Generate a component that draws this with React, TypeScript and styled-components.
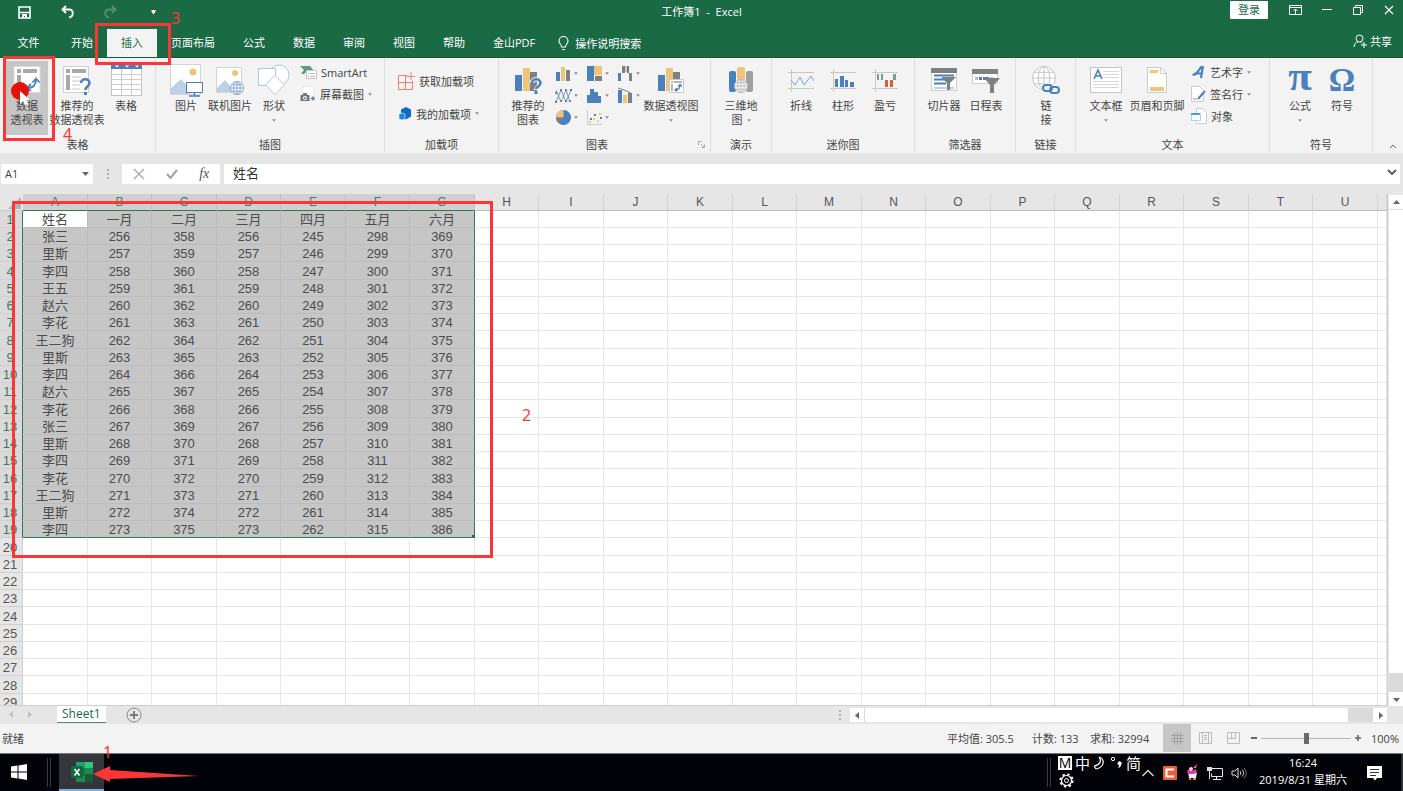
import React from "react";
import styled, { createGlobalStyle, css } from "styled-components";

const GREEN = "#1b6a46";
const BLUE = "#4a80bd";
const SAND = "#efc57c";
const GREY = "#808080";
const RED = "#fb3636";

const Global = createGlobalStyle`
  * { box-sizing: border-box; }
  body {
    margin: 0;
    font-family: "Open Sans", "Noto Sans CJK SC", sans-serif;
    font-size: 11px;
    color: #444;
    overflow: hidden;
  }
  button, input { font: inherit; color: inherit; }
  button { background: none; border: 0; padding: 0; margin: 0; }
  svg { display: block; flex: none; }
`;

const Screen = styled.div`
  position: relative;
  display: flex;
  flex-direction: column;
  height: 100vh;
  background: #e6e6e6;
`;

/* ---------- title bar and tabs ---------- */

const Header = styled.header`
  flex: none;
  background: ${GREEN};
  color: #fff;
  border-bottom: 1px solid #0f5c39;
`;

const TitleBar = styled.div`
  display: grid;
  grid-template-columns: 1fr auto 1fr;
  height: 28px;
`;

const QuickAccess = styled.div`
  display: flex;
  align-items: center;
  padding: 0 0 4px 16px;
  gap: 26px;
`;

const IconButton = styled.button<{ $dim?: boolean }>`
  display: flex;
  align-items: center;
  justify-content: center;
  width: 17px;
  height: 16px;
  opacity: ${(p) => (p.$dim ? 0.25 : 1)};
`;

const Title = styled.div`
  line-height: 24px;
  white-space: pre;
`;

const WindowControls = styled.div`
  display: flex;
  justify-content: flex-end;
  align-items: center;
  padding: 0 6px 8px 0;
  gap: 14px;
`;

const LoginButton = styled.button`
  width: 38px;
  height: 18px;
  line-height: 18px;
  background: #fff;
  color: ${GREEN};
  border-radius: 1px;
  margin-right: 5px;
  align-self: flex-start;
  margin-top: 1px;
`;

const TabRow = styled.nav`
  display: flex;
  height: 28px;
  margin-top: 1px;
`;

const Tab = styled.button<{ $active?: boolean; $wide?: boolean }>`
  padding: 0 14px;
  min-width: ${(p) => (p.$wide ? 57 : 50)}px;
  line-height: 28px;
  white-space: nowrap;
  ${(p) => p.$active && css`background: #f3f3f3; color: ${GREEN};`}
`;

const TellMe = styled.button`
  display: flex;
  align-items: center;
  gap: 6px;
  padding-left: 9px;
`;

const Share = styled.button`
  display: flex;
  align-items: center;
  gap: 3px;
  margin-left: auto;
  padding: 0 11px 4px 0;
`;

/* ---------- ribbon ---------- */

const Ribbon = styled.section`
  display: flex;
  flex: none;
  height: 96px;
  background: #f3f3f3;
  border-bottom: 1px solid #ececec;
`;

const Group = styled.div<{ $w: number; $pad: number }>`
  position: relative;
  display: flex;
  flex-direction: column;
  flex: none;
  width: ${(p) => p.$w}px;
  border-right: 1px solid #dcdcdc;
  margin: 1px 0;
  > div { padding-left: ${(p) => p.$pad}px; }
`;

const GroupBody = styled.div`
  display: flex;
  flex: 1;
  padding-top: 2px;
`;

const GroupLabel = styled.span<{ $launcher?: boolean }>`
  height: 16px;
  line-height: 17px;
  text-align: center;
  padding-right: ${(p) => (p.$launcher ? 15 : 0)}px;
`;

const BigButton = styled.button<{ $w: number; $on?: boolean }>`
  display: flex;
  flex-direction: column;
  align-items: center;
  flex: none;
  width: ${(p) => p.$w}px;
  height: 74px;
  line-height: 14px;
  white-space: nowrap;
  background: ${(p) => (p.$on ? "#c6c6c6" : "none")};
`;

const IconBox = styled.span`
  display: flex;
  align-items: center;
  justify-content: center;
  height: 38px;
`;

const LabelLine = styled.span`
  display: flex;
  align-items: center;
  justify-content: center;
  gap: 4px;
  height: 14px;
`;

const SmallColumn = styled.div<{ $row: number; $top?: number }>`
  display: flex;
  flex-direction: column;
  margin-left: 6px;
  padding-top: ${(p) => p.$top ?? 0}px;
  button { height: ${(p) => p.$row}px; }
`;

const SmallButton = styled.button`
  display: flex;
  align-items: center;
  gap: 4px;
  white-space: nowrap;
`;

const ChartGrid = styled.div`
  display: grid;
  grid-template-columns: 31px 31px 26px;
  grid-auto-rows: 22px;
  margin-left: 7px;
  padding-top: 1px;
  height: 67px;
  button { display: flex; align-items: center; gap: 2px; }
`;

const Glyph = styled.span<{ $size: number; $lift: number }>`
  font: bold ${(p) => p.$size}px/28px "Liberation Serif", serif;
  padding-bottom: ${(p) => p.$lift}px;
  color: ${BLUE};
`;

const Launcher = styled.button`
  position: absolute;
  right: 5px;
  bottom: 4px;
`;

const RibbonEnd = styled.div`
  display: flex;
  flex: 1;
  align-items: flex-end;
  justify-content: flex-end;
  padding: 0 6px 4px 0;
`;

/* ---------- formula bar ---------- */

const FormulaRow = styled.div`
  display: flex;
  flex: none;
  height: 40px;
  padding: 10px 3px 10px 1px;
`;

const NameBox = styled.label`
  display: flex;
  align-items: center;
  width: 92px;
  padding: 0 4px 2px;
  background: #fff;
  input { flex: 1; min-width: 0; border: 0; padding: 0; outline: 0; background: none; }
`;

const Dots = styled.span`
  display: flex;
  align-items: center;
  justify-content: center;
  width: 29px;
`;

const FormulaButtons = styled.div`
  display: flex;
  align-items: center;
  justify-content: space-around;
  width: 98px;
  background: #fff;
  margin-right: 4px;
`;

const FxLabel = styled.button`
  font: italic 14px/16px "Liberation Serif", serif;
  color: #555;
`;

const FormulaInput = styled.label`
  display: flex;
  align-items: center;
  flex: 1;
  background: #fff;
  padding: 0 3px 4px 9px;
  input {
    flex: 1;
    border: 0;
    padding: 0;
    outline: 0;
    background: none;
    height: 16px;
    font-size: 13px;
    color: #333;
  }
`;

/* ---------- sheet ---------- */

const SheetArea = styled.main`
  display: flex;
  flex: 1;
  min-height: 0;
`;

const GridView = styled.div`
  flex: 1;
  min-width: 0;
  overflow: hidden;
  background: #fff;
  border-right: 1px solid #cfcfcf;
  border-bottom: 1px solid #cfcfcf;
`;

const Table = styled.table`
  table-layout: fixed;
  width: 100%;
  border-collapse: separate;
  border-spacing: 0;
  font-family: "Liberation Sans", "Noto Sans CJK SC", sans-serif;
  font-size: 13px;
  th, td { padding: 0; overflow: hidden; white-space: nowrap; text-align: center; }
`;

const ColHead = styled.th<{ $on?: boolean }>`
  height: 17px;
  line-height: 16px;
  font-size: 12px;
  font-weight: 400;
  background: ${(p) => (p.$on ? "#d0d0d0" : "#e6e6e6")};
  color: ${(p) => (p.$on ? "#3f7a5f" : "#555")};
  border-right: 1px solid ${(p) => (p.$on ? "#c2c2c2" : "#d4d4d4")};
  border-bottom: 1px solid ${(p) => (p.$on ? "#2f7a56" : "#bdbdbd")};
`;

const Corner = styled.th`
  background: #e6e6e6;
  border-bottom: 1px solid #c8c8c8;
  svg { margin: 2px 0 0 8px; }
`;

const Row = styled.tr<{ $tall: boolean }>`
  height: ${(p) => (p.$tall ? 18 : 17)}px;
  line-height: 14px;
  && > * { padding-top: 2px; }
`;

const RowHead = styled.th<{ $on: boolean }>`
  font-weight: 400;
  background: ${(p) => (p.$on ? "#dadada" : "#e6e6e6")};
  color: ${(p) => (p.$on ? "#3f7a5f" : "#555")};
  border-right: 1px solid ${(p) => (p.$on ? "#2f7a56" : "#cfcfcf")};
  border-bottom: 1px solid #d0d0d0;
  && { padding-right: 2px; }
`;

const Cell = styled.td<{ $on?: boolean; $active?: boolean; $right?: boolean; $bottom?: boolean }>`
  color: #4c4c4c;
  background: ${(p) => (p.$active ? "#fff" : p.$on ? "#c6c6c6" : "#fff")};
  border-right: 1px solid ${(p) => (p.$right ? "#2f7a56" : p.$on ? "#bcbcbc" : "#e6e6e6")};
  border-bottom: 1px solid ${(p) => (p.$bottom ? "#2f7a56" : p.$on ? "#bcbcbc" : "#e6e6e6")};
  ${(p) => p.$right && p.$bottom && css`
    background: linear-gradient(${GREEN}, ${GREEN}) right bottom / 2px 2px no-repeat #c6c6c6;
  `}
`;

const VScroll = styled.div`
  display: flex;
  flex-direction: column;
  width: 14px;
  margin: 1px 0 0 1px;
  background: #dadada;
`;

const ScrollButton = styled.button`
  display: flex;
  align-items: center;
  justify-content: center;
  flex: none;
  width: 14px;
  height: 14px;
  background: #fff;
`;

const VThumb = styled.div`
  flex: 1;
  background: #fff;
  margin: 1px 0 19px;
`;

const SheetBar = styled.div`
  display: flex;
  align-items: flex-start;
  flex: none;
  height: 18px;
`;

const SheetNav = styled.div`
  display: flex;
  justify-content: center;
  gap: 11px;
  width: 57px;
  padding: 5px 17px 0 0;
`;

const SheetTab = styled.button`
  height: 17px;
  padding: 0 5px;
  line-height: 16px;
  font-size: 12px;
  color: ${GREEN};
  background: #fff;
  border-bottom: 1px solid #4f8d70;
`;

const AddSheet = styled.button`
  margin: 1px 0 0 20px;
`;

const HScroll = styled.div`
  display: flex;
  width: 537px;
  height: 14px;
  margin: 2px 16px 0 0;
  background: #dadada;
`;

const HThumb = styled.div`
  flex: 1;
  background: #fff;
  margin: 0 25px 0 1px;
`;

const BarDots = styled.span`
  margin: 4px 9px 0 auto;
`;

/* ---------- status bar ---------- */

const StatusBar = styled.footer`
  display: flex;
  align-items: center;
  flex: none;
  height: 30px;
  padding: 0 4px 1px 2px;
  background: #f3f3f3;
  border-bottom: 1px solid #777;
`;

const Spacer = styled.span`
  flex: 1;
`;

const Stat = styled.span<{ $w: number }>`
  width: ${(p) => p.$w}px;
  white-space: nowrap;
`;

const ViewButton = styled.button<{ $on?: boolean }>`
  display: flex;
  align-items: center;
  justify-content: center;
  width: 28px;
  height: 28px;
  background: ${(p) => (p.$on ? "#c6c6c6" : "none")};
`;

const ZoomButton = styled.button`
  display: flex;
  justify-content: center;
  width: 14px;
`;

const ZoomRange = styled.input`
  appearance: none;
  width: 90px;
  height: 12px;
  margin: 0;
  background: linear-gradient(#b5b5b5, #b5b5b5) center / 100% 1px no-repeat;
  &::-webkit-slider-thumb {
    appearance: none;
    width: 5px;
    height: 11px;
    background: #6a6a6a;
  }
`;

const ZoomValue = styled.span`
  width: 34px;
  text-align: right;
`;

/* ---------- task bar ---------- */

const TaskBar = styled.div`
  display: flex;
  flex: none;
  height: 37px;
  background: #020308;
  color: #fff;
  border-right: 2px solid #2c2d31;
`;

const StartButton = styled.button`
  width: 47px;
  padding: 0 0 1px 11px;
`;

const Grip = styled.span`
  width: 4px;
  margin: 4px 0;
  border: solid #3a3b3f;
  border-width: 0 1px;
`;

const TaskApp = styled.button`
  display: flex;
  align-items: center;
  justify-content: center;
  width: 45px;
  margin-left: 8px;
  background: #34363b;
  border-bottom: 2px solid #7fb0dc;
`;

const Ime = styled.div`
  display: grid;
  grid-template-rows: 18px 16px;
  align-items: center;
  width: 89px;
  padding-left: 7px;
  div { display: flex; align-items: center; gap: 3px; font-size: 15px; line-height: 18px; }
`;

const ImeMode = styled.b`
  width: 14px;
  height: 14px;
  line-height: 14px;
  text-align: center;
  font-weight: 400;
  font-size: 14px;
  background: #fff;
  color: #000;
`;

const Tray = styled.div`
  display: flex;
  align-items: center;
  gap: 8px;
  padding-left: 1px;
`;

const Clock = styled.div`
  width: 112px;
  text-align: center;
  line-height: 17px;
`;

const Notice = styled.button`
  width: 34px;
  padding-left: 8px;
  margin-right: 8px;
`;

/* ---------- tutorial marks laid over the window ---------- */

const MarkBox = styled.div<{ $x: number; $y: number; $w: number; $h: number }>`
  position: absolute;
  left: ${(p) => p.$x}px;
  top: ${(p) => p.$y}px;
  width: ${(p) => p.$w}px;
  height: ${(p) => p.$h}px;
  border: 3px solid ${RED};
  pointer-events: none;
`;

const MarkNumber = styled.span<{ $x: number; $y: number }>`
  position: absolute;
  left: ${(p) => p.$x}px;
  top: ${(p) => p.$y}px;
  font: 16px/18px "Noto Sans", sans-serif;
  color: ${RED};
`;

const MarkSvg = styled.svg<{ $x: number; $y: number }>`
  position: absolute;
  left: ${(p) => p.$x}px;
  top: ${(p) => p.$y}px;
  pointer-events: none;
`;

/* ---------- icons ---------- */

type SvgProps = { w: number; h: number; children: React.ReactNode };
const Svg = ({ w, h, children }: SvgProps) => (
  <svg width={w} height={h} viewBox={`0 0 ${w} ${h}`} fill="none" aria-hidden="true">
    {children}
  </svg>
);

const Caret = () => (
  <Svg w={4} h={3}><path d="M0.500 0.500h3L2 2.500z" fill="#777" stroke="#999" strokeWidth="0.400" /></Svg>
);

const PivotIcon = () => (
  <Svg w={28} h={30}>
    <rect x="1" y="1.500" width="26" height="26" fill="#fff" stroke="#dadada" />
    <path d="M4 4h4v4H4zM10 4h14v4H10zM4 10h4v15H4z" fill="#a8a8a8" />
    <path d="M14 23c7 0 9-3 9-9" stroke={BLUE} strokeWidth="2" />
    <path d="M18 19l-4 4 4 3M19.500 17.500l3.500-4 3.500 4" stroke={BLUE} strokeWidth="1.800" />
  </Svg>
);

const RecommendedPivotIcon = () => (
  <Svg w={30} h={30}>
    <rect x="1.500" y="1.500" width="25" height="26" fill="#fff" stroke="#cfcfcf" />
    <path d="M4 4h4v4H4zM10 4h14v4H10zM4 10h4v15H4z" fill="#a8a8a8" />
    <path d="M10 12h9M10 16h8M10 20h8M10 24h8" stroke="#c9c9c9" />
    <path d="M19 18c0-5 8.500-5 8.500 0 0 3.500-4 3.500-4 7" stroke={BLUE} strokeWidth="2.600" />
    <rect x="22" y="27" width="3" height="3" fill={BLUE} />
  </Svg>
);

const TableIcon = () => (
  <Svg w={31} h={32}>
    <rect x="0.500" y="0.500" width="30" height="31" fill="#fff" stroke="#c4c4c4" />
    <rect width="31" height="5" fill={BLUE} />
    <path d="M4 1.500h4l-2 2zM14 1.500h4l-2 2zM24 1.500h4l-2 2z" fill="#fff" />
    <path d="M10.500 5v26M20.500 5v26M0 10.500h31M0 15.500h31M0 20.500h31M0 25.500h31" stroke="#cccccc" />
  </Svg>
);

const PictureIcon = () => (
  <Svg w={34} h={34}>
    <rect x="1.500" y="1.500" width="30" height="30" fill="#fff" stroke="#d4d4d4" />
    <circle cx="24" cy="9" r="3.500" fill={SAND} />
    <path d="M1 31V26L12 16l9 10v5z" fill="#bcd0e6" />
    <rect x="17.500" y="19.500" width="16" height="10" fill="#fff" stroke={BLUE} />
    <path d="M25.500 30v3M20 33h11" stroke={BLUE} strokeWidth="1.500" />
  </Svg>
);

const Globe = ({ x, y, r, color }: { x: number; y: number; r: number; color: string }) => (
  <g stroke={color} fill="none">
    <circle cx={x} cy={y} r={r} fill="#fff" />
    <ellipse cx={x} cy={y} rx={r / 2} ry={r} />
    <path d={`M${x - r} ${y}h${2 * r}M${x} ${y - r}v${2 * r}M${x - r * 0.85} ${y - r / 2}h${r * 1.7}M${x - r * 0.85} ${y + r / 2}h${r * 1.7}`} />
  </g>
);

const OnlinePictureIcon = () => (
  <Svg w={28} h={30}>
    <rect x="0.500" y="2.500" width="25" height="25" fill="#fff" stroke="#d4d4d4" />
    <circle cx="19" cy="8" r="3" fill={SAND} />
    <path d="M1 27V23l8-8 7 8v4z" fill="#bcd0e6" />
    <Globe x={21} y={23} r={6.5} color="#86a9d0" />
  </Svg>
);

const ShapesIcon = () => (
  <Svg w={32} h={32}>
    <g fill="#fff" stroke="#b0c7e0">
      <circle cx="21" cy="11" r="10" />
      <rect x="0.500" y="4.500" width="17" height="17" />
      <path d="M17 11.500l9.500 9.500-9.500 9.500L7.500 21z" />
    </g>
  </Svg>
);

const SmartArtIcon = () => (
  <Svg w={17} h={15}>
    <path d="M0 1h10l4 5H7L4 9H1l3-4z" fill="#5f9a84" />
    <rect x="6.500" y="5.500" width="10" height="8" fill="#fff" stroke="#c4c4c4" />
    <path d="M8 8.500h1M10 8.500h5M8 11.500h1M10 11.500h5" stroke="#bbb" />
  </Svg>
);

const ScreenshotIcon = () => (
  <Svg w={16} h={16}>
    <path d="M2.500 8V0.500h11V11" fill="#fff" stroke="#dcdcdc" strokeDasharray="1 1" />
    <path d="M0.500 9h2l1-2h3l1 2h2v6h-9z" fill="#777" />
    <circle cx="5" cy="12" r="2" fill="#fff" />
    <circle cx="5" cy="12" r="1" fill="#777" />
    <path d="M11 12.500h4M13 10.500v4" stroke={BLUE} strokeWidth="1.500" />
  </Svg>
);

const GetAddinIcon = () => (
  <Svg w={17} h={18}>
    <path d="M0.500 3.500h7v14h-7zM0.500 10.500h14v7h-14M7.500 3.500h2M14.500 10.500v-2M13 0v8M9 4.500h8" stroke="#ea8563" />
  </Svg>
);

const MyAddinIcon = () => (
  <Svg w={14} h={14}>
    <path d="M8 0l5 2.500v7L8 12.500 3 10V2.500z" fill="#0f6ac8" />
    <path d="M1 7l3-1 3 1v5l-3 1-3-1z" fill="#1c86e8" stroke="#f3f3f3" strokeWidth="0.600" />
  </Svg>
);

const BarsBase = () => (
  <>
    <rect y="8" width="7" height="16" fill={BLUE} />
    <rect x="8" y="1" width="7" height="23" fill={SAND} />
    <rect x="15" y="5" width="7" height="19" fill={GREY} />
  </>
);

const RecommendedChartIcon = () => (
  <Svg w={27} h={30}>
    <g transform="translate(0 2)"><BarsBase /></g>
    <path d="M17 18c0-5 8.500-5 8.500 0 0 3.500-4.500 3.500-4.500 7" stroke="#f3f3f3" strokeWidth="4.500" />
    <path d="M17 18c0-5 8.500-5 8.500 0 0 3.500-4.500 3.500-4.500 6" stroke={BLUE} strokeWidth="2.600" />
    <rect x="19.500" y="26" width="3" height="3" fill={BLUE} />
  </Svg>
);

const PivotChartIcon = () => (
  <Svg w={27} h={30}>
    <g transform="translate(0 2)"><BarsBase /></g>
    <rect x="11.500" y="14.500" width="14" height="13" fill="#fff" stroke="#ccc" />
    <path d="M13 16h2v2h-2zM16 16h8v2h-8zM13 19h2v7h-2z" fill="#b5b5b5" />
    <path d="M17 25c4 0 5-2 5-5M19 23l-2 2 2 1.500M20 21.500l2-2 2 2" stroke={BLUE} strokeWidth="1.300" />
  </Svg>
);

const chartIcons: Record<string, React.ReactNode> = {
  柱形图: (
    <><rect x="1" y="7" width="4" height="9" fill={BLUE} /><rect x="6" y="2" width="4" height="14" fill={SAND} /><rect x="11" y="5" width="4" height="11" fill={GREY} /></>
  ),
  树状图: (
    <><rect x="1" y="1" width="7" height="15" fill={BLUE} /><rect x="8" y="1" width="8" height="9" fill={SAND} /><rect x="9" y="11" width="7" height="5" fill={GREY} /></>
  ),
  瀑布图: (
    <><rect x="1" y="8" width="3" height="8" fill={BLUE} /><rect x="5" y="1" width="3" height="7" fill={GREY} /><rect x="8" y="1" width="3" height="6" fill={SAND} /><rect x="10" y="1" width="2" height="7" fill={BLUE} /><rect x="12" y="8" width="3" height="8" fill={GREY} /></>
  ),
  折线图: (
    <><path d="M1 3l5 12 5-12 4 12" stroke={GREY} strokeWidth="0.800" /><path d="M1 15L6 3l5 12 5-12" stroke={BLUE} strokeWidth="0.800" /><path d="M0 14h2v2H0zM5 2h2v2H5zM10 13h2v2h-2zM15 2h2v2h-2z" fill={BLUE} /><path d="M0 5h2v2H0zM5 13h2v2H5zM10 2h2v2h-2zM14 13h2v2h-2z" fill={GREY} /></>
  ),
  直方图: (
    <path d="M1 8h3v8H1zM4 2h4v14H4zM8 5h4v11H8zM12 9h3v7h-3z" fill={BLUE} />
  ),
  组合图: (
    <><rect x="1" y="3" width="4" height="13" fill={BLUE} /><rect x="6" y="8" width="4" height="8" fill={SAND} /><rect x="11" y="6" width="4" height="10" fill={GREY} /><path d="M1 1l6 2 7 3" stroke={GREY} /></>
  ),
  饼图: (
    <><circle cx="8.500" cy="8.500" r="7.500" fill={BLUE} /><path d="M8.500 8.500V1A7.500 7.500 0 0 0 1 8.500z" fill={SAND} /><path d="M8.500 8.500H1A7.500 7.500 0 0 0 4 14.500z" fill={GREY} /></>
  ),
  散点图: (
    <><path d="M1.500 1v14.500H16" stroke="#ccc" /><path d="M4 9h2v2H4zM8 5h2v2H8zM14 8h2v2h-2z" fill={BLUE} /><path d="M3 12h2v2H3zM7 9h2v2H7zM11 11h2v2h-2zM13 4h2v2h-2z" fill={SAND} /></>
  ),
};

const MapIcon = () => (
  <Svg w={26} h={28}>
    <rect x="1" y="5" width="7" height="21" rx="2" fill={BLUE} />
    <rect x="9" y="1" width="8" height="24" rx="2" fill={SAND} />
    <rect x="18" y="5" width="7" height="21" rx="2" fill="#a0a0a0" />
    <Globe x={13} y={20} r={6.5} color="#bbb" />
  </Svg>
);

const SparkFrame = ({ children }: { children: React.ReactNode }) => (
  <Svg w={26} h={24}>
    <path d="M0 4.500h26M0 20.500h26M3.500 1v23" stroke="#c8c8c8" />
    {children}
  </Svg>
);

const SparkLine = () => (
  <SparkFrame><path d="M3 12l4 5 5-8 4 8 7-9 3 5" stroke="#7ba0cf" /></SparkFrame>
);
const SparkColumn = () => (
  <SparkFrame><path d="M5 11h3v8H5zM10 8h4v11h-4zM15 12h3v7h-3zM20 14h4v5h-4z" fill={BLUE} /></SparkFrame>
);
const SparkWinLoss = () => (
  <SparkFrame>
    <path d="M5 6h2v6H5zM9 6h2v6H9zM21 6h3v6h-3z" fill="#6ea392" />
    <path d="M13 12h3v7h-3zM18 12h3v7h-3z" fill="#d8622f" />
  </SparkFrame>
);

const SlicerIcon = () => (
  <Svg w={26} h={26}>
    <rect x="0.500" y="1.500" width="25" height="22" fill="#fff" stroke="#cfcfcf" />
    <rect width="26" height="5" y="1" fill={GREY} />
    <path d="M3 8.500h20M3 12.500h14M3 16.500h12" stroke={BLUE} strokeWidth="2" />
    <path d="M3 21h20" stroke="#bcd0e6" strokeWidth="2" />
    <path d="M10 10h15l-6 6v7h-3v-7z" fill={GREY} />
  </Svg>
);

const TimelineIcon = () => (
  <Svg w={28} h={28}>
    <rect x="0.500" y="3.500" width="25" height="14" fill="#fff" stroke="#cfcfcf" />
    <rect y="3" width="26" height="5" fill={GREY} />
    <path d="M3 12.500h3M18 12.500h3" stroke="#bbb" strokeWidth="3" />
    <path d="M7 12.500h3M11 12.500h6" stroke={BLUE} strokeWidth="3" />
    <path d="M12 12h16l-6 7v8h-4v-8z" fill={GREY} />
  </Svg>
);

const LinkIcon = () => (
  <Svg w={30} h={32}>
    <Globe x={13} y={14} r={11.5} color="#c4c4c4" />
    <g stroke="#f3f3f3" strokeWidth="5">
      <rect x="13" y="21" width="9" height="6" rx="3" /><rect x="19" y="23" width="9" height="6" rx="3" />
    </g>
    <g stroke={BLUE} strokeWidth="2">
      <rect x="12" y="21" width="9" height="6" rx="3" /><rect x="19" y="23" width="9" height="6" rx="3" />
    </g>
  </Svg>
);

const TextBoxIcon = () => (
  <Svg w={32} h={28}>
    <rect x="0.500" y="1.500" width="31" height="25" fill="#fff" stroke="#c4c4c4" />
    <path d="M4 13l4-9 4 9M5.500 10h5" stroke={BLUE} strokeWidth="1.600" />
    <path d="M13 5.500h16M13 8.500h16M13 11.500h16M3 15.500h26M3 18.500h26M3 21.500h26" stroke="#d8d8d8" />
  </Svg>
);

const HeaderFooterIcon = () => (
  <Svg w={20} h={28}>
    <path d="M0.500 1.500h13l6 6v19h-19z" fill="#fff" stroke="#cccccc" />
    <path d="M13.500 1.500v6h6" stroke="#cccccc" />
    <path d="M3 4h8v3H3zM3 21h14v4H3z" fill={SAND} />
  </Svg>
);

const WordArtIcon = () => (
  <Svg w={15} h={14}>
    <path d="M1.500 9.500c4 1 6-4 9-8M12 1l-2 12M6 8.500h5" stroke={BLUE} strokeWidth="2.200" />
  </Svg>
);

const SignatureIcon = () => (
  <Svg w={15} h={16}>
    <path d="M0.500 0.500h8l4 4v11h-12z" fill="#fff" stroke="#cccccc" />
    <path d="M7 13l7-8" stroke={BLUE} strokeWidth="2" /><path d="M2 13h4" stroke="#999" />
  </Svg>
);

const ObjectIcon = () => (
  <Svg w={16} h={16}>
    <path d="M5.500 0.500h6l4 4v11h-10z" fill="#fff" stroke="#cccccc" />
    <rect x="0.500" y="5.500" width="9" height="7" fill="#fff" stroke="#b8d0e4" />
    <rect y="5" width="9" height="2" fill="#4ea0d8" />
  </Svg>
);

const VDots = () => (
  <Svg w={2} h={11}><path d="M0 0h2v2H0zM0 4h2v2H0zM0 8h2v2H0z" fill="#b0b0b0" /></Svg>
);

const Arrow = ({ dir, color = "#666" }: { dir: "up" | "down" | "left" | "right"; color?: string }) => {
  const d = { up: "M0 5h7L3.500 1z", down: "M0 2h7L3.500 6z", left: "M5 0v7L1 3.500z", right: "M2 0v7l4-3.500z" }[dir];
  return <Svg w={7} h={7}><path d={d} fill={color} /></Svg>;
};

/* ---------- data ---------- */

const columns = "ABCDEFGHIJKLMNOPQRSTU".split("");
const people = ["张三", "里斯", "李四", "王五", "赵六", "李花", "王二狗", "里斯", "李四", "赵六", "李花", "张三", "里斯", "李四", "李花", "王二狗", "里斯", "李四"];
const firstValues = [256, 358, 256, 245, 298, 369];
const rows: string[][] = [
  ["姓名", "一月", "二月", "三月", "四月", "五月", "六月"],
  ...people.map((name, i) => [name, ...firstValues.map((v) => String(v + i))]),
];
const rowCount = 29;

type BigProps = { w: number; icon: React.ReactNode; lines: string[]; on?: boolean; caret?: "below" | "inline" };
const Big = ({ w, icon, lines, on, caret }: BigProps) => (
  <BigButton $w={w} $on={on}>
    <IconBox>{icon}</IconBox>
    {lines.map((line, i) => (
      <LabelLine key={line}>
        {line}
        {caret === "inline" && i === lines.length - 1 && <Caret />}
      </LabelLine>
    ))}
    {caret === "below" && <LabelLine><Caret /></LabelLine>}
  </BigButton>
);

const tabs = ["文件", "开始", "插入", "页面布局", "公式", "数据", "审阅", "视图", "帮助", "金山PDF"];

export default function App() {
  return (
    <Screen>
      <Global />
      <Header>
        <TitleBar>
          <QuickAccess>
            <IconButton aria-label="保存">
              <Svg w={13} h={13}>
                <path d="M1 1h11v11H1z" stroke="#fff" strokeWidth="1.600" />
                <path d="M1 6.500h11" stroke="#fff" strokeWidth="1.600" /><path d="M4 8h5v4H7v-2H6v2H4z" fill="#fff" />
              </Svg>
            </IconButton>
            <IconButton aria-label="撤消">
              <Svg w={13} h={14}><path d="M1 4.500h7c5 0 5 7 0 8M5 1L1.500 4.500 5 8" stroke="#fff" strokeWidth="1.800" /></Svg>
            </IconButton>
            <IconButton aria-label="恢复" $dim>
              <Svg w={13} h={14}><path d="M12 4.500H5c-5 0-5 7 0 8M8 1l3.500 3.500L8 8" stroke="#fff" strokeWidth="1.800" /></Svg>
            </IconButton>
            <IconButton aria-label="自定义快速访问工具栏">
              <Svg w={5} h={6}><path d="M0.500 1h4v1.500L2.500 5.500 0.500 2.500z" fill="#fff" /></Svg>
            </IconButton>
          </QuickAccess>
          <Title>工作簿1  -  Excel</Title>
          <WindowControls>
            <LoginButton>登录</LoginButton>
            <IconButton aria-label="功能区显示选项">
              <Svg w={13} h={10}><path d="M0.500 0.500h12v9H.5zM0 2.500h13M6.500 9V4M4.500 6l2-2 2 2" stroke="#fff" /></Svg>
            </IconButton>
            <IconButton aria-label="最小化"><Svg w={10} h={2}><path d="M0 0.500h10" stroke="#fff" /></Svg></IconButton>
            <IconButton aria-label="还原">
              <Svg w={10} h={10}><path d="M0.500 2.500h7v7h-7zM2.500 2.500v-2h7v7h-2" stroke="#fff" /></Svg>
            </IconButton>
            <IconButton aria-label="关闭"><Svg w={10} h={10}><path d="M1 1l8 8M9 1L1 9" stroke="#fff" strokeWidth="1.200" /></Svg></IconButton>
          </WindowControls>
        </TitleBar>
        <TabRow>
          {tabs.map((t, i) => <Tab key={t} $active={t === "插入"} $wide={i === 0}>{t}</Tab>)}
          <TellMe>
            <Svg w={11} h={15}>
              <path d="M3.500 11C3.500 8 1 8 1 5a4.500 4.500 0 0 1 9 0c0 3-2.500 3-2.500 6zM4 13.500h3" stroke="#fff" strokeWidth="1.100" />
            </Svg>
            操作说明搜索
          </TellMe>
          <Share>
            <Svg w={14} h={14}>
              <circle cx="6.500" cy="4.500" r="3.500" stroke="#fff" /><path d="M1 13c0-3 2-5 4-5M8 8.500l1 1M11 8v6M8 11h6" stroke="#fff" />
            </Svg>
            共享
          </Share>
        </TabRow>
      </Header>

      <Ribbon>
        <Group $w={156} $pad={6}>
          <GroupBody>
            <Big w={42} on icon={<PivotIcon />} lines={["数据", "透视表"]} />
            <Big w={58} icon={<RecommendedPivotIcon />} lines={["推荐的", "数据透视表"]} />
            <Big w={40} icon={<TableIcon />} lines={["表格"]} />
          </GroupBody>
          <GroupLabel>表格</GroupLabel>
        </Group>
        <Group $w={229} $pad={10}>
          <GroupBody>
            <Big w={40} icon={<PictureIcon />} lines={["图片"]} />
            <Big w={48} icon={<OnlinePictureIcon />} lines={["联机图片"]} />
            <Big w={40} icon={<ShapesIcon />} lines={["形状"]} caret="below" />
            <SmallColumn $row={22}>
              <SmallButton><SmartArtIcon />SmartArt</SmallButton>
              <SmallButton><ScreenshotIcon />屏幕截图<Caret /></SmallButton>
            </SmallColumn>
          </GroupBody>
          <GroupLabel>插图</GroupLabel>
        </Group>
        <Group $w={114} $pad={7}>
          <GroupBody>
            <SmallColumn $row={33} $top={3}>
              <SmallButton><GetAddinIcon />获取加载项</SmallButton>
              <SmallButton><MyAddinIcon />我的加载项<Caret /></SmallButton>
            </SmallColumn>
          </GroupBody>
          <GroupLabel>加载项</GroupLabel>
        </Group>
        <Group $w={212} $pad={9}>
          <GroupBody>
            <Big w={40} icon={<RecommendedChartIcon />} lines={["推荐的", "图表"]} />
            <ChartGrid>
              {Object.entries(chartIcons).map(([name, art]) => (
                <button key={name} aria-label={name}><Svg w={17} h={17}>{art}</Svg><Caret /></button>
              ))}
            </ChartGrid>
            <Big w={56} icon={<PivotChartIcon />} lines={["数据透视图"]} caret="below" />
          </GroupBody>
          <GroupLabel $launcher>图表</GroupLabel>
          <Launcher aria-label="图表选项">
            <Svg w={7} h={7}><path d="M0.500 4V.5H4M3 3l3 3M6.500 3.500v3H3.500" stroke="#aaa" /></Svg>
          </Launcher>
        </Group>
        <Group $w={61} $pad={9}>
          <GroupBody><Big w={42} icon={<MapIcon />} lines={["三维地", "图"]} caret="inline" /></GroupBody>
          <GroupLabel>演示</GroupLabel>
        </Group>
        <Group $w={143} $pad={8}>
          <GroupBody>
            <Big w={42} icon={<SparkLine />} lines={["折线"]} />
            <Big w={42} icon={<SparkColumn />} lines={["柱形"]} />
            <Big w={42} icon={<SparkWinLoss />} lines={["盈亏"]} />
          </GroupBody>
          <GroupLabel>迷你图</GroupLabel>
        </Group>
        <Group $w={101} $pad={8}>
          <GroupBody>
            <Big w={42} icon={<SlicerIcon />} lines={["切片器"]} />
            <Big w={42} icon={<TimelineIcon />} lines={["日程表"]} />
          </GroupBody>
          <GroupLabel>筛选器</GroupLabel>
        </Group>
        <Group $w={60} $pad={9}>
          <GroupBody><Big w={42} icon={<LinkIcon />} lines={["链", "接"]} /></GroupBody>
          <GroupLabel>链接</GroupLabel>
        </Group>
        <Group $w={194} $pad={7}>
          <GroupBody>
            <Big w={46} icon={<TextBoxIcon />} lines={["文本框"]} caret="below" />
            <Big w={56} icon={<HeaderFooterIcon />} lines={["页眉和页脚"]} />
            <SmallColumn $row={22}>
              <SmallButton><WordArtIcon />艺术字<Caret /></SmallButton>
              <SmallButton><SignatureIcon />签名行<Caret /></SmallButton>
              <SmallButton><ObjectIcon />对象</SmallButton>
            </SmallColumn>
          </GroupBody>
          <GroupLabel>文本</GroupLabel>
        </Group>
        <Group $w={103} $pad={9}>
          <GroupBody>
            <Big w={42} icon={<Glyph $size={43} $lift={9}>π</Glyph>} lines={["公式"]} caret="below" />
            <Big w={42} icon={<Glyph $size={33} $lift={0}>Ω</Glyph>} lines={["符号"]} />
          </GroupBody>
          <GroupLabel>符号</GroupLabel>
        </Group>
        <RibbonEnd>
          <button aria-label="折叠功能区"><Svg w={8} h={6}><path d="M1 5l3-3 3 3" stroke="#666" /></Svg></button>
        </RibbonEnd>
      </Ribbon>

      <FormulaRow>
        <NameBox>
          <input aria-label="名称框" defaultValue="A1" />
          <Arrow dir="down" />
        </NameBox>
        <Dots><VDots /></Dots>
        <FormulaButtons>
          <button aria-label="取消"><Svg w={12} h={12}><path d="M1 1l10 10M11 1L1 11" stroke="#b0b0b0" strokeWidth="1.500" /></Svg></button>
          <button aria-label="输入"><Svg w={12} h={10}><path d="M1 5l3.500 4L11 1" stroke="#a0a0a0" strokeWidth="2" /></Svg></button>
          <FxLabel>fx</FxLabel>
        </FormulaButtons>
        <FormulaInput>
          <input aria-label="编辑栏" defaultValue="姓名" />
          <Svg w={10} h={8}><path d="M1 2l4 4 4-4" stroke="#555" strokeWidth="1.800" /></Svg>
        </FormulaInput>
      </FormulaRow>

      <SheetArea>
        <GridView>
          <Table>
            <colgroup>
              <col width={23} />
              {columns.map((c, i) => <col key={c} width={i % 2 ? 64 : 65} />)}
              <col />
            </colgroup>
            <thead>
              <tr>
                <Corner><Svg w={13} h={12}><path d="M13 0v12H0z" fill="#b4b4b4" /></Svg></Corner>
                {columns.map((c, i) => <ColHead key={c} $on={i < 7}>{c}</ColHead>)}
                <ColHead />
              </tr>
            </thead>
            <tbody>
              {Array.from({ length: rowCount }, (_, r) => (
                <Row key={r} $tall={r % 4 === 3}>
                  <RowHead $on={r < rows.length}>{r + 1}</RowHead>
                  {columns.map((c, i) => {
                    const on = r < rows.length && i < 7;
                    return (
                      <Cell key={c} $on={on} $active={r === 0 && i === 0} $right={on && i === 6} $bottom={on && r === rows.length - 1}>
                        {on ? rows[r][i] : null}
                      </Cell>
                    );
                  })}
                  <Cell />
                </Row>
              ))}
            </tbody>
          </Table>
        </GridView>
        <VScroll>
          <ScrollButton aria-label="向上滚动"><Arrow dir="up" /></ScrollButton>
          <VThumb />
          <ScrollButton aria-label="向下滚动"><Arrow dir="down" /></ScrollButton>
        </VScroll>
      </SheetArea>

      <SheetBar>
        <SheetNav><Arrow dir="left" color="#c0c0c0" /><Arrow dir="right" color="#c0c0c0" /></SheetNav>
        <SheetTab>Sheet1</SheetTab>
        <AddSheet aria-label="新工作表">
          <Svg w={16} h={16}><circle cx="8" cy="8" r="7" stroke="#888" /><path d="M8 4v8M4 8h8" stroke="#777" strokeWidth="1.800" /></Svg>
        </AddSheet>
        <BarDots><VDots /></BarDots>
        <HScroll>
          <ScrollButton aria-label="向左滚动"><Arrow dir="left" /></ScrollButton>
          <HThumb />
          <ScrollButton aria-label="向右滚动"><Arrow dir="right" /></ScrollButton>
        </HScroll>
      </SheetBar>

      <StatusBar>
        就绪
        <Spacer />
        <Stat $w={85}>平均值: 305.5</Stat>
        <Stat $w={58}>计数: 133</Stat>
        <Stat $w={73}>求和: 32994</Stat>
        <ViewButton $on aria-label="普通"><Svg w={13} h={13}><path d="M.5 3.500h12M.5 6.500h12M.5 9.500h12M3.500.5v12M6.500.5v12M9.500.5v12" stroke="#a0a0a0" /></Svg></ViewButton>
        <ViewButton aria-label="页面布局"><Svg w={13} h={12}><path d="M.5.5h12v11H.5zM3.500.5v11M9.500.5v11M5 3.500h3M5 5.500h3M5 7.500h3" stroke="#bcbcbc" /></Svg></ViewButton>
        <ViewButton aria-label="分页预览"><Svg w={13} h={12}><path d="M.5.5h12v11H.5zM4.500.5v6M.5 6.500h8v-6" stroke="#bcbcbc" /></Svg></ViewButton>
        <ZoomButton aria-label="缩小"><Svg w={6} h={6}><path d="M0 3h6" stroke="#666" strokeWidth="2" /></Svg></ZoomButton>
        <ZoomRange type="range" aria-label="缩放" defaultValue={50} />
        <ZoomButton aria-label="放大"><Svg w={6} h={6}><path d="M0 3h6M3 0v6" stroke="#666" strokeWidth="1.600" /></Svg></ZoomButton>
        <ZoomValue>100%</ZoomValue>
      </StatusBar>

      <TaskBar>
        <StartButton aria-label="开始">
          <Svg w={16} h={16}><path d="M0 2.500L6.500 1.500v6H0zM7.500 1.400L16 0v7.500H7.500zM0 8.500h6.500v6L0 13.500zM7.500 8.500H16V16l-8.500-1.400z" fill="#fff" /></Svg>
        </StartButton>
        <Grip />
        <TaskApp aria-label="Excel">
          <Svg w={22} h={20}>
            <rect x="5" width="17" height="20" rx="1" fill="#1f8a56" />
            <rect x="5" width="9" height="6" fill="#21a366" /><rect x="14" width="8" height="6" fill="#33c481" />
            <rect x="5" y="6" width="9" height="8" fill="#107c41" /><rect x="14" y="12" width="8" height="8" fill="#185c37" />
            <rect y="4" width="12" height="12" rx="1" fill="#0f6b3a" />
            <path d="M3.500 7l5 6.500M8.500 7l-5 6.500" stroke="#fff" strokeWidth="1.600" />
          </Svg>
        </TaskApp>
        <Spacer />
        <Grip />
        <Ime>
          <div><ImeMode>M</ImeMode><span>中</span>
            <Svg w={14} h={14}><path d="M6 1c6 2 6 10-3 12M6 1c3 4 1 8-5 9M3 13l-2-3" stroke="#fff" strokeWidth="1.200" /></Svg>
            <Svg w={13} h={14}><circle cx="3" cy="3" r="1.700" stroke="#fff" /><path d="M8 6a2 2 0 1 1 3 3c0 2-2 3-3 3 1-1 1-2 1-3a2 2 0 0 1-1-3z" fill="#fff" /></Svg>
            <span>简</span></div>
          <Svg w={16} h={15}>
            <circle cx="8.500" cy="7.500" r="5" stroke="#fff" strokeWidth="1.200" /><circle cx="8.500" cy="7.500" r="2" stroke="#fff" />
            <circle cx="8.500" cy="7.500" r="6.200" stroke="#fff" strokeWidth="1.800" strokeDasharray="2.400 2.470" />
          </Svg>
        </Ime>
        <Tray>
          <Svg w={14} h={10}><path d="M1.500 8L7 2.500 12.500 8" stroke="#ddd" strokeWidth="1.300" /></Svg>
          <Svg w={14} h={14}><rect width="14" height="14" rx="1" fill="#e8603c" /><path d="M11 3.500H3.500v7H11" stroke="#fff" strokeWidth="2" /></Svg>
          <Svg w={14} h={17}>
            <path d="M3 8h9l-1 6H4z" fill="#eee" /><path d="M2 7l2-2 3 2 4-2 1 4-4 1-5 0z" fill="#d93ab0" />
            <path d="M8 4l4-4-1 4z" fill="#ff5aa0" /><circle cx="6" cy="5" r="2" fill="#f4d5b0" /><path d="M4 15h2M8 15h3" stroke="#e0803a" strokeWidth="2" />
          </Svg>
          <Svg w={16} h={14}><path d="M4.500 2.500h11v8h-11v-3M9.500 11v2M6 13.500h8" stroke="#e8e8e8" /><path d="M0 1h5v4H3v8H2V5H0z" fill="#ddd" /></Svg>
          <Svg w={16} h={14}><path d="M1 5h3l3-3v10L4 9H1z" stroke="#ddd" /><path d="M9 5c1 1 1 3 0 4M11 3.500c2 2 2 5 0 7" stroke="#ccc" /><path d="M13 2c3 3 3 7 0 10" stroke="#777" /></Svg>
        </Tray>
        <Clock>
          <div>16:24</div>
          <div>2019/8/31 星期六</div>
        </Clock>
        <Notice aria-label="通知">
          <Svg w={15} h={16}><path d="M0 1h15v12h-5l-2 2.500L6 13H0z" fill="#fff" /><path d="M3 4.500h9M3 7.500h9M3 10.500h6" stroke="#333" /></Svg>
        </Notice>
      </TaskBar>

      <MarkSvg $x={10} $y={80} width="20" height="26" viewBox="0 0 20 26">
        <circle cx="10" cy="11" r="9" fill="#e3120b" />
        <path d="M10 11v13l3-3 2 4 3-1-2-4h4z" fill="#fff" />
      </MarkSvg>
      <MarkBox $x={95} $y={23} $w={76} $h={42} />
      <MarkBox $x={3} $y={56} $w={52} $h={85} />
      <MarkBox $x={12} $y={201} $w={481} $h={357} />
      <MarkNumber $x={103} $y={743}>1</MarkNumber>
      <MarkNumber $x={522} $y={406}>2</MarkNumber>
      <MarkNumber $x={171} $y={9}>3</MarkNumber>
      <MarkNumber $x={63} $y={125}>4</MarkNumber>
      <MarkSvg $x={93} $y={765} width="106" height="18" viewBox="0 0 106 18">
        <path d="M0 9L17 1v4l89 6-89 3v3z" fill={RED} />
      </MarkSvg>
    </Screen>
  );
}
